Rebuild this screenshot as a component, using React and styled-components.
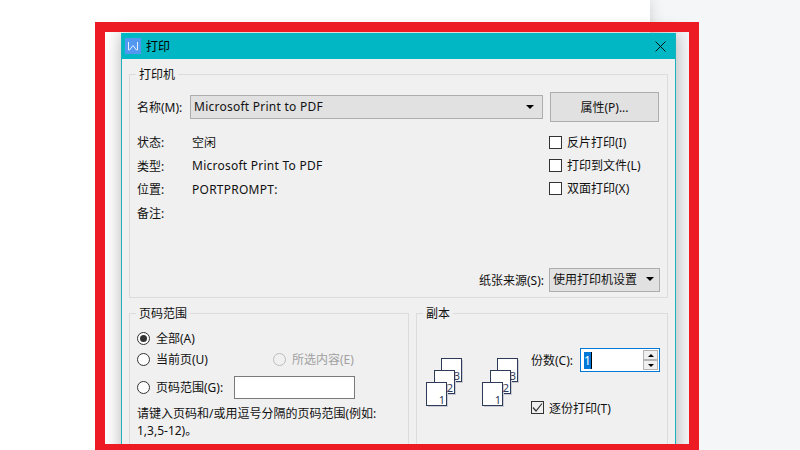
import React from 'react';
import styled, { createGlobalStyle } from 'styled-components';

const GlobalStyle = createGlobalStyle`
  html, body {
    margin: 0;
    padding: 0;
    background: #fff;
  }
  * {
    box-sizing: border-box;
  }
`;

const Stage = styled.div`
  position: relative;
  width: 800px;
  height: 450px;
  overflow: hidden;
  display: flex;
  background: #f5f6f8;
  font-family: "Noto Sans", "Noto Sans CJK SC", sans-serif;
  font-size: 12px;
  color: #111;
`;

const Sheet = styled.div`
  width: 650px;
  height: 100%;
  background: #fff;
  box-shadow: 0 0 14px rgba(0, 0, 0, 0.16);
`;

const Highlight = styled.div`
  position: absolute;
  left: 95px;
  top: 22px;
  width: 604px;
  height: 428px;
  border: 10px solid #ed1c24;
  border-bottom-width: 6px;
  pointer-events: none;
`;

const Dialog = styled.div`
  position: absolute;
  left: 121px;
  top: 33px;
  width: 555px;
  height: 440px;
  background: #f0f0f0;
  border: 1px solid #19b2bd;
  border-top: none;
  box-shadow: 0 0 16px rgba(0, 0, 0, 0.3);
`;

const TitleBar = styled.div`
  height: 26px;
  background: #00b7c3;
  display: flex;
  align-items: center;
  padding: 0 9px 0 3px;
  gap: 5px;
  font-size: 12px;
  color: #000;
`;

const TitleText = styled.span`
  flex: 1;
`;

const Body = styled.div`
  padding: 7px 7px 0;
  display: flex;
  flex-direction: column;
  gap: 7px;
`;

const Group = styled.fieldset`
  margin: 0;
  min-width: 0;
  padding: ${props => props.$padding || '0'};
  border: 1px solid #dcdcdc;
  height: ${props => props.$height}px;
  width: ${props => (props.$width ? `${props.$width}px` : 'auto')};
`;

const Legend = styled.legend`
  margin-left: ${props => props.$inset}px;
  padding: 0 3px;
  line-height: 18px;
  height: 16px;
`;

const NameRow = styled.div`
  display: flex;
  align-items: center;
  height: 30px;
`;

const NameLabel = styled.span`
  width: 53px;
  padding-bottom: 1px;
`;

const Select = styled.div`
  width: ${props => props.$width}px;
  height: ${props => props.$height}px;
  border: 1px solid #adadad;
  background: #e1e1e1;
  display: flex;
  align-items: center;
  justify-content: space-between;
  padding: 0 ${props => props.$arrowGap}px 1px 3px;
`;

const Latin = styled.span`
  letter-spacing: 0.25px;
`;

const Arrow = styled.span`
  width: 0;
  height: 0;
  border-left: ${props => props.$size || 4}px solid transparent;
  border-right: ${props => props.$size || 4}px solid transparent;
  border-${props => (props.$up ? 'bottom' : 'top')}: ${props => props.$size || 4}px solid #000;
`;

const Button = styled.div`
  width: 109px;
  height: 30px;
  margin-left: 7px;
  border: 1px solid #adadad;
  background: #e1e1e1;
  display: flex;
  align-items: center;
  justify-content: center;
  padding-bottom: 1px;
`;

const DetailRow = styled.div`
  display: flex;
  justify-content: space-between;
  margin-top: 8px;
`;

const InfoGrid = styled.div`
  display: grid;
  grid-template-columns: 55px auto;
  grid-auto-rows: 23.7px;
  align-items: center;
`;

const Checks = styled.div`
  width: 110px;
  display: flex;
  flex-direction: column;
  gap: 6px;
  padding-top: 3.5px;
`;

const CheckRow = styled.div`
  display: flex;
  align-items: center;
  gap: 5px;
  height: 17px;
  white-space: nowrap;
`;

const Box = styled.span`
  width: 13px;
  height: 13px;
  flex: none;
  border: 1px solid #333;
  background: ${props => (props.$checked ? 'transparent' : '#fff')};
  display: flex;
  align-items: center;
  justify-content: center;
`;

const SourceRow = styled.div`
  margin-top: 43px;
  margin-right: -1px;
  display: flex;
  align-items: center;
  justify-content: flex-end;
  gap: 5px;
`;

const BottomRow = styled.div`
  display: flex;
  gap: 7px;
`;

const RadioRow = styled.div`
  display: flex;
  align-items: center;
  height: ${props => props.$height}px;
  margin-top: ${props => props.$top || 0}px;
  color: ${props => (props.$disabled ? '#a0a0a0' : 'inherit')};
`;

const Radio = styled.span`
  width: 13px;
  height: 13px;
  flex: none;
  margin-right: 6px;
  border-radius: 50%;
  border: 1px solid ${props => (props.$disabled ? '#bcbcbc' : '#333')};
  background: ${props => (props.$disabled ? '#f0f0f0' : '#fff')};
  display: flex;
  align-items: center;
  justify-content: center;

  &::after {
    content: '';
    display: ${props => (props.$checked ? 'block' : 'none')};
    width: 7px;
    height: 7px;
    border-radius: 50%;
    background: #333;
  }
`;

const RadioSpacer = styled.div`
  width: 117px;
`;

const RangeInput = styled.div`
  width: 121px;
  height: 23px;
  margin-left: 11px;
  background: #fff;
  border: 1px solid #7a7a7a;
`;

const Hint = styled.p`
  margin: 5px 0 0;
  line-height: 17px;
  width: 262px;
`;

const CopiesRow = styled.div`
  display: flex;
  padding-top: 27px;
`;

const PagesArt = styled.svg`
  flex: none;
  width: 105px;
  height: 60px;
  margin-top: 10px;
`;

const CopiesColumn = styled.div`
  display: flex;
  flex-direction: column;
  gap: 27px;
`;

const CountRow = styled.div`
  display: flex;
  align-items: center;
  height: 24px;
`;

const CountLabel = styled.span`
  width: 49px;
`;

const CountInput = styled.div`
  width: 80px;
  height: 24px;
  background: #fff;
  border: 1px solid #0078d7;
  display: flex;
  align-items: center;
  justify-content: space-between;
  padding: 0 1px 0 3px;
`;

const Selected = styled.span`
  background: #0078d7;
  color: #fff;
  width: 8px;
  height: 17px;
  line-height: 17px;
  border-right: 1px solid #000;
`;

const Spinner = styled.div`
  width: 15px;
  display: flex;
  flex-direction: column;
`;

const SpinButton = styled.div`
  height: 10px;
  background: #f0f0f0;
  border: 1px solid #b4b4b4;
  display: flex;
  align-items: center;
  justify-content: center;
`;

const WpsLogo = () => (
  <svg width="16" height="16" viewBox="0 0 16 16" aria-hidden="true">
    <rect width="16" height="16" fill="#5298f0" />
    <path d="M3.5 4 V12 H4.5 L8 7.5 L11.5 12 H12.5 V4" fill="none" stroke="#e8f1ff" strokeWidth="1" />
  </svg>
);

const CloseIcon = () => (
  <svg width="11" height="11" viewBox="0 0 11 11" aria-hidden="true">
    <path d="M0.5 0.5 L10.5 10.5 M10.5 0.5 L0.5 10.5" stroke="#111" strokeWidth="1" fill="none" />
  </svg>
);

const Tick = () => (
  <svg width="11" height="11" viewBox="0 0 11 11" aria-hidden="true">
    <path d="M1 5.5 L4 9 L10 1.5" stroke="#333" strokeWidth="1.2" fill="none" />
  </svg>
);

const pageStack = [
  { x: 15.5, y: 0.5, n: '3' },
  { x: 8.5, y: 12.5, n: '2' },
  { x: 0.5, y: 24.5, n: '1' },
];

const PageSet = ({ dx }) => (
  <g transform={`translate(${dx} 0)`}>
    {pageStack.map(p => (
      <g key={p.n}>
        <rect x={p.x + 1.5} y={p.y + 1.5} width="20" height="23" fill="#c9ccd4" />
        <rect x={p.x} y={p.y} width="20" height="23" fill="#fff" stroke="#2f3a58" strokeWidth="1" />
      </g>
    ))}
    {pageStack.map(p => (
      <text key={p.n} x={p.x + 18.5} y={p.y + 21.5} textAnchor="end" fontSize="11" fill="#2f3a58" fontFamily="Noto Sans, sans-serif">
        {p.n}
      </text>
    ))}
  </g>
);

const infoRows = [
  ['状态:', '空闲'],
  ['类型:', <Latin>Microsoft Print To PDF</Latin>],
  ['位置:', <Latin>PORTPROMPT:</Latin>],
  ['备注:', ''],
];

const printChecks = ['反片打印(I)', '打印到文件(L)', '双面打印(X)'];

const App = () => (
  <Stage>
    <GlobalStyle />
    <Sheet />
    <Dialog>
      <TitleBar>
        <WpsLogo />
        <TitleText>打印</TitleText>
        <CloseIcon />
      </TitleBar>
      <Body>
        <Group $height={232} $padding="10px 8px 0 7px">
          <Legend $inset={-1}>打印机</Legend>
          <NameRow>
            <NameLabel>名称(M):</NameLabel>
            <Select $width={353} $height={24} $arrowGap={8}>
              <Latin>Microsoft Print to PDF</Latin>
              <Arrow />
            </Select>
            <Button>属性(P)...</Button>
          </NameRow>
          <DetailRow>
            <InfoGrid>
              {infoRows.map(([label, value]) => (
                <React.Fragment key={label}>
                  <span>{label}</span>
                  <span>{value}</span>
                </React.Fragment>
              ))}
            </InfoGrid>
            <Checks>
              {printChecks.map(text => (
                <CheckRow key={text}>
                  <Box />
                  {text}
                </CheckRow>
              ))}
            </Checks>
          </DetailRow>
          <SourceRow>
            纸张来源(S):
            <Select $width={111} $height={24} $arrowGap={5}>
              使用打印机设置
              <Arrow />
            </Select>
          </SourceRow>
        </Group>
        <BottomRow>
          <Group $width={280} $height={140} $padding="3px 7px 0">
            <Legend $inset={-1}>页码范围</Legend>
            <RadioRow $height={28}>
              <Radio $checked />
              全部(A)
            </RadioRow>
            <RadioRow $height={14}>
              <Radio />
              <RadioSpacer>当前页(U)</RadioSpacer>
              <RadioRow $height={14} $disabled>
                <Radio $disabled />
                所选内容(E)
              </RadioRow>
            </RadioRow>
            <RadioRow $height={26} $top={8}>
              <Radio />
              页码范围(G):
              <RangeInput />
            </RadioRow>
            <Hint>请键入页码和/或用逗号分隔的页码范围(例如: 1,3,5-12)。</Hint>
          </Group>
          <Group $width={252} $height={140} $padding="0 7px 0 9px">
            <Legend $inset={-3}>副本</Legend>
            <CopiesRow>
              <PagesArt viewBox="0 0 105 60" aria-hidden="true">
                <PageSet dx={0} />
                <PageSet dx={56} />
              </PagesArt>
              <CopiesColumn>
                <CountRow>
                  <CountLabel>份数(C):</CountLabel>
                  <CountInput>
                    <Selected>1</Selected>
                    <Spinner>
                      <SpinButton><Arrow $up $size={3} /></SpinButton>
                      <SpinButton><Arrow $size={3} /></SpinButton>
                    </Spinner>
                  </CountInput>
                </CountRow>
                <CheckRow>
                  <Box $checked><Tick /></Box>
                  逐份打印(T)
                </CheckRow>
              </CopiesColumn>
            </CopiesRow>
          </Group>
        </BottomRow>
      </Body>
    </Dialog>
    <Highlight />
  </Stage>
);

export default App;
